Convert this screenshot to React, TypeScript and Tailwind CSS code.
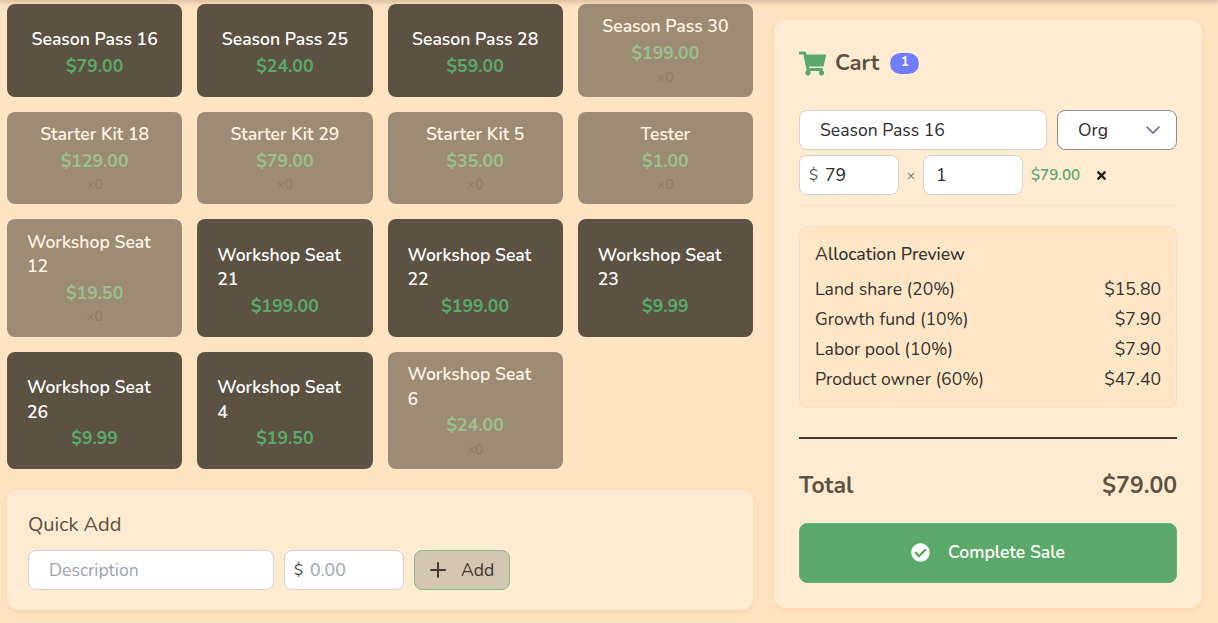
import { ChevronDown, Plus } from 'lucide-react';
import { FaCheckCircle, FaShoppingCart, FaTimes } from 'react-icons/fa';

type Product = { name: string; price: string; stock?: boolean };

const products: Product[] = [
  { name: 'Season Pass 16', price: '$79.00', stock: true },
  { name: 'Season Pass 25', price: '$24.00', stock: true },
  { name: 'Season Pass 28', price: '$59.00', stock: true },
  { name: 'Season Pass 30', price: '$199.00' },
  { name: 'Starter Kit 18', price: '$129.00' },
  { name: 'Starter Kit 29', price: '$79.00' },
  { name: 'Starter Kit 5', price: '$35.00' },
  { name: 'Tester', price: '$1.00' },
  { name: 'Workshop Seat 12', price: '$19.50' },
  { name: 'Workshop Seat 21', price: '$199.00', stock: true },
  { name: 'Workshop Seat 22', price: '$199.00', stock: true },
  { name: 'Workshop Seat 23', price: '$9.99', stock: true },
  { name: 'Workshop Seat 26', price: '$9.99', stock: true },
  { name: 'Workshop Seat 4', price: '$19.50', stock: true },
  { name: 'Workshop Seat 6', price: '$24.00' },
];

const allocation = [
  ['Land share (20%)', '$15.80'],
  ['Growth fund (10%)', '$7.90'],
  ['Labor pool (10%)', '$7.90'],
  ['Product owner (60%)', '$47.40'],
];

function ProductCard({ product }: { product: Product }) {
  return (
    <button
      className={`flex flex-col items-center justify-center rounded-lg bg-[#5c5244] px-5 ${
        product.stock ? 'pt-[6px]' : 'pt-[1px] opacity-60'
      }`}
    >
      <span className="text-left text-[17.6px] leading-[24.64px] font-semibold text-white">{product.name}</span>
      <span className="mt-[1px] text-[17.6px] leading-[26.4px] font-bold text-[#5aa96b]">{product.price}</span>
      {!product.stock && <span className="text-[14px] leading-[21px] text-[#3e3729]">×0</span>}
    </button>
  );
}

export default function App() {
  return (
    <div className="h-[623px] w-[1218px] overflow-hidden bg-[#ffe4c1] font-['Nunito','Lato','Noto_Sans',sans-serif] text-[#333]">
      <div className="h-0 shadow-[0_0_5px_2px_rgba(92,82,68,0.35)]" />
      <div className="flex items-start gap-[21px] pt-1 pl-[7px]">
        <div className="w-[746px]">
          <div className="grid grid-cols-4 grid-rows-[93px_92px_118px_117px] gap-[15px]">
            {products.map((p) => (
              <ProductCard key={p.name} product={p} />
            ))}
          </div>

          <div className="mt-[21px] h-[120px] rounded-xl bg-[#feecd2] px-[21px] pt-[21px] shadow-[0_2px_6px_rgba(230,180,120,0.3)]">
            <div className="text-[20px] leading-[28px] text-[#5c5244]">Quick Add</div>
            <div className="mt-[11px] flex gap-[10px]">
              <input
                placeholder="Description"
                className="h-10 w-[246px] rounded-lg border border-[#d4d4d8] bg-white pl-5 text-[17.6px] outline-none placeholder:text-[#9ca3af]"
              />
              <div className="flex h-10 w-[120px] items-center rounded-lg border border-[#d4d4d8] bg-white pl-[9px] text-[17.6px]">
                <span className="text-[15px] text-[#444]">$</span>
                <input placeholder="0.00" className="ml-[7px] w-20 outline-none placeholder:text-[#9ca3af]" />
              </div>
              <button className="flex h-10 w-[96px] items-center gap-[11px] rounded-lg border border-[#7fc08a] bg-[#d3c6b2] pl-[11px] text-[17.6px] text-[#403a30]">
                <Plus size={24} strokeWidth={2} />
                Add
              </button>
            </div>
          </div>
        </div>

        <div className="mt-4 h-[588px] w-[428px] rounded-xl bg-[#feecd2] px-[25px] pt-[25px] shadow-[0_2px_6px_rgba(230,180,120,0.3)]">
          <div className="flex h-[36px] items-center">
            <FaShoppingCart size={27} className="text-[#5aa96b]" />
            <span className="ml-[9px] text-[22px] font-bold text-[#5c5244]">Cart</span>
            <span className="ml-[11px] flex h-[21px] w-[29px] items-center justify-center rounded-full bg-[#6f7cff] text-[13px] font-bold text-white">
              1
            </span>
          </div>

          <div className="mt-[29px] flex gap-[10px]">
            <input
              defaultValue="Season Pass 16"
              className="h-10 w-[248px] rounded-lg border border-[#d4d4d8] bg-white pl-5 text-[17.6px] text-[#2b2b2b] outline-none"
            />
            <div className="flex h-10 w-[120px] items-center justify-between rounded-lg border border-[#8f8f8f] bg-white pr-[11px] pl-5 text-[17.6px] text-[#2b2b2b]">
              <span className="pt-px">Org</span>
              <ChevronDown size={24} strokeWidth={1.6} className="text-[#5f6b7d]" />
            </div>
          </div>

          <div className="mt-[5px] flex items-center">
            <div className="flex h-10 w-[100px] items-center rounded-lg border border-[#d4d4d8] bg-white pl-[9px] text-[17.6px] text-[#2b2b2b]">
              <span className="text-[15px] text-[#555]">$</span>
              <input defaultValue="79" className="ml-[7px] w-12 outline-none" />
            </div>
            <span className="w-6 text-center text-[14px] text-[#6b6b6b]">×</span>
            <input
              defaultValue="1"
              className="h-10 w-[100px] rounded-lg border border-[#d4d4d8] bg-white pl-3 text-[17.6px] text-[#2b2b2b] outline-none"
            />
            <span className="ml-2 text-[15.2px] font-semibold text-[#5aa96b]">$79.00</span>
            <FaTimes size={13} className="ml-[15px] text-[#222]" />
          </div>

          <div className="mt-[10px] h-px bg-[#fbe3c6]" />

          <div className="mt-5 h-[182px] rounded-lg border border-[#fde0b8] bg-[#ffe6c4] px-[15px] pt-[14px]">
            <div className="text-[17.6px] leading-[26px] font-medium text-[#333]">Allocation Preview</div>
            <div className="mt-[7px]">
              {allocation.map(([label, amount]) => (
                <div key={label} className="flex h-[30px] items-center justify-between text-[17.6px] text-[#333]">
                  <span>{label}</span>
                  <span>{amount}</span>
                </div>
              ))}
            </div>
          </div>

          <div className="mt-[29px] h-[2px] bg-[#41382c]" />

          <div className="mt-[31px] flex items-center justify-between text-[23px] leading-[32px] font-bold text-[#5c5244]">
            <span>Total</span>
            <span>$79.00</span>
          </div>

          <button className="mt-[21px] flex h-[60px] w-full items-center justify-center gap-[18px] rounded-lg border border-[#66b377] bg-[#5aa96b] pb-px text-[17.6px] font-semibold text-white">
            <FaCheckCircle size={19} />
            Complete Sale
          </button>
        </div>
      </div>
    </div>
  );
}
